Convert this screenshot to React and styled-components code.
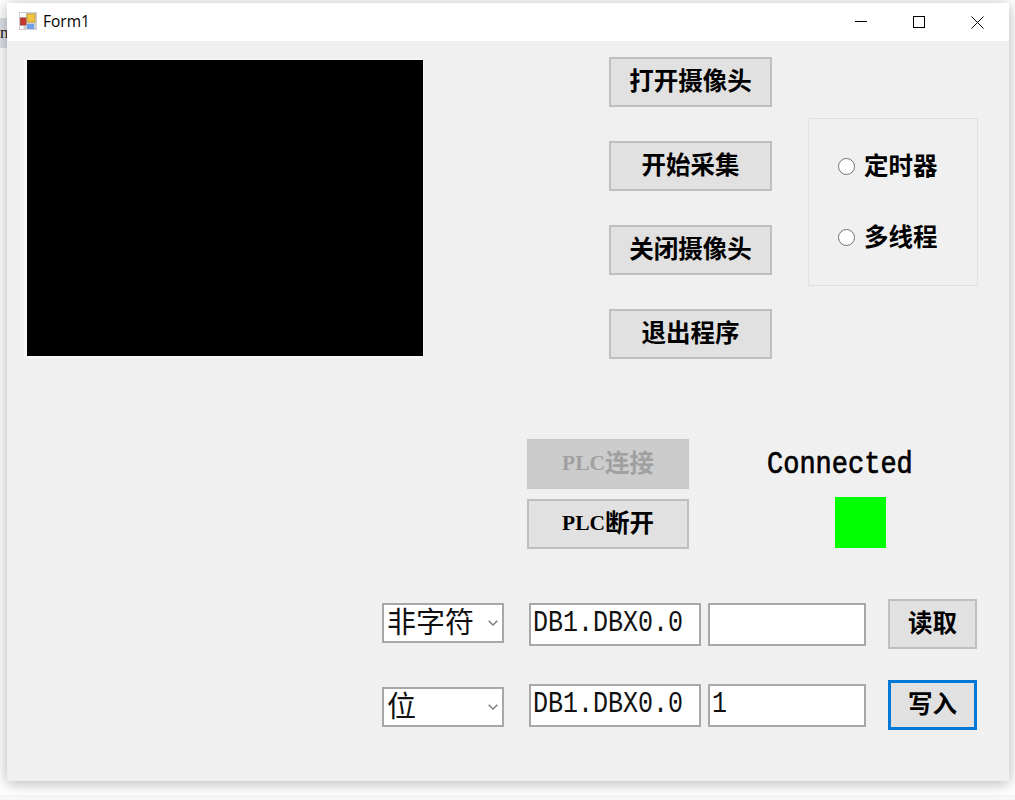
import React from 'react'
import styled, { createGlobalStyle } from 'styled-components'

const SERIF = `"Liberation Serif", "Noto Sans CJK SC", serif`
const MONO = `"Liberation Mono", "Noto Sans CJK SC", monospace`

const GlobalStyle = createGlobalStyle`
  html, body {
    margin: 0;
    padding: 0;
    background: #fff;
  }
  body {
    width: 1015px;
    height: 800px;
    overflow: hidden;
    font-family: ${SERIF};
  }
`

const Desktop = styled.div`
  position: relative;
  width: 1015px;
  height: 800px;
  padding: 3px 6px 0 7px;
  box-sizing: border-box;
  background: linear-gradient(#fff 0, #fff 795px, #f7f7f7 795px);
`

const BehindTab = styled.div`
  position: absolute;
  left: 0;
  top: 18px;
  width: 7px;
  height: 30px;
  background: #dde1e8;
  overflow: hidden;
  font: 17px ${SERIF};
  line-height: 30px;
  color: #222;
`

const Win = styled.div`
  position: relative;
  height: 778px;
  display: flex;
  flex-direction: column;
  box-shadow: 0 2px 14px rgba(0, 0, 0, 0.3);
  background: #f0f0f0;
`

const TitleBar = styled.div`
  height: 38px;
  flex: none;
  background: #fff;
  display: flex;
  align-items: center;
  padding: 0 2px 0 12px;
`

const AppIcon = styled.svg`
  width: 18px;
  height: 18px;
  margin-right: 6px;
  margin-top: -2px;
`

const TitleText = styled.span`
  flex: 1;
  font: 15.5px "Open Sans", "Noto Sans", sans-serif;
  color: #000;
  margin-top: -2px;
`

const WinButton = styled.div`
  width: 58.5px;
  height: 38px;
  display: flex;
  align-items: center;
  justify-content: center;
`

const Client = styled.div`
  flex: 1;
  display: flex;
  flex-direction: column;
`

const TopSection = styled.div`
  display: flex;
  align-items: flex-start;
  padding: 16px 0 0 17px;
`

const Camera = styled.div`
  width: 396px;
  height: 296px;
  margin-top: 2px;
  background: #000;
  border: solid #f7f7f7;
  border-width: 1px 1px 2px 3px;
  margin-right: 1px;
`

const ButtonColumn = styled.div`
  display: flex;
  flex-direction: column;
  gap: 34px;
  margin-left: 184px;
`

const Btn = styled.button`
  box-sizing: border-box;
  width: ${p => p.$w || 163}px;
  height: 50px;
  padding: 0 0 5px;
  background: ${p => (p.disabled ? '#cccccc' : '#e1e1e1')};
  border: ${p => (p.$focus ? '3px solid #0078d7' : p.disabled ? '1px solid #c8c8c8' : '2px solid #bfbfbf')};
  color: ${p => (p.disabled ? '#a0a0a0' : '#000')};
  font: bold 24.5px ${SERIF};
  display: flex;
  align-items: center;
  justify-content: center;
`

const Latin = styled.span`
  font-size: 21.5px;
  padding-top: 3px;
`

const GroupBox = styled.div`
  box-sizing: border-box;
  width: 170px;
  height: 168px;
  margin: 61px 0 0 36px;
  border: 1px solid #e0e0e0;
  display: flex;
  flex-direction: column;
  justify-content: center;
  gap: 35px;
  padding-left: 29px;
`

const RadioRow = styled.label`
  display: flex;
  align-items: center;
  height: 36px;
  gap: 9px;
  font: bold 24.5px ${SERIF};
  color: #000;
`

const RadioLabel = styled.span`
  margin-top: -4px;
`

const RadioDot = styled.span`
  box-sizing: border-box;
  width: 17px;
  height: 17px;
  border-radius: 50%;
  border: 1.5px solid #707070;
  background: #fff;
`

const PlcSection = styled.div`
  display: flex;
  align-items: flex-start;
  height: 160px;
  padding: 80px 0 0 520px;
`

const PlcButtons = styled.div`
  display: flex;
  flex-direction: column;
  gap: 10px;
`

const Status = styled.div`
  display: flex;
  flex-direction: column;
  margin-left: 78px;
  width: 146px;
`

const StatusText = styled.div`
  font: 27px ${MONO};
  -webkit-text-stroke: 0.6px #000;
  line-height: 52px;
  margin-bottom: 6px;
  color: #000;
  transform: scaleY(1.15);
`

const Led = styled.div`
  width: 51px;
  height: 51px;
  background: #00ff00;
  margin-left: 68px;
`

const FormRows = styled.div`
  display: flex;
  flex-direction: column;
  gap: 31px;
  padding-left: 375px;
`

const FormRow = styled.div`
  display: flex;
  align-items: center;
  height: 50px;
`

const Combo = styled.div`
  box-sizing: border-box;
  width: 122px;
  height: 40px;
  flex: none;
  margin-top: ${p => p.$dy}px;
  background: #fff;
  border: 2px solid #a8a8a8;
  display: flex;
  align-items: center;
  justify-content: space-between;
  padding: 0 4px 6px 3px;
  font: 29px "Noto Sans CJK SC", sans-serif;
  line-height: 32px;
  color: #111;
`

const ComboArrow = styled.svg`
  margin-top: 6px;
`

const Field = styled.div`
  box-sizing: border-box;
  width: ${p => p.$w}px;
  height: 43px;
  flex: none;
  margin-left: ${p => p.$ml}px;
  background: #fff;
  border: 2px solid #a8a8a8;
  padding-left: 2px;
  font: 25px ${MONO};
  line-height: 38px;
  color: #111;
`

const FieldText = styled.span`
  display: inline-block;
  transform: scaleY(1.2);
`

const ActionBtn = styled(Btn)`
  margin-left: 22px;
`

const Chevron = () => (
  <ComboArrow width="10" height="6" viewBox="0 0 10 6" fill="none" stroke="#777" strokeWidth="1.3">
    <path d="M0.7 0.7L5 5L9.3 0.7" />
  </ComboArrow>
)

export default function App () {
  return <Desktop>
    <GlobalStyle />
    <BehindTab>n</BehindTab>
    <Win>
      <TitleBar>
        <AppIcon viewBox="0 0 18 18">
          <rect x="0" y="0" width="18" height="18" fill="#cfcfcf" />
          <rect x="1" y="1" width="6" height="4" fill="#fff" />
          <rect x="1" y="14" width="3.5" height="3" fill="#fff" />
          <rect x="8" y="2" width="8" height="8" fill="#f2c640" stroke="#b98f1f" strokeWidth="0.7" />
          <rect x="1.5" y="6" width="5.5" height="7" fill="#c8372d" stroke="#9a3a32" strokeWidth="0.7" />
          <rect x="8" y="12" width="7" height="5" fill="#6f9fe6" />
        </AppIcon>
        <TitleText>Form1</TitleText>
        <WinButton>
          <svg width="12" height="12" viewBox="0 0 12 12"><path d="M0 5.5H12" stroke="#000" /></svg>
        </WinButton>
        <WinButton>
          <svg width="12" height="12" viewBox="0 0 12 12"><rect x="0.5" y="0.5" width="11" height="11" fill="none" stroke="#000" /></svg>
        </WinButton>
        <WinButton>
          <svg width="13" height="13" viewBox="0 0 13 13"><path d="M0.5 0.5L12.5 12.5M12.5 0.5L0.5 12.5" stroke="#000" /></svg>
        </WinButton>
      </TitleBar>
      <Client>
        <TopSection>
          <Camera />
          <ButtonColumn>
            <Btn>打开摄像头</Btn>
            <Btn>开始采集</Btn>
            <Btn>关闭摄像头</Btn>
            <Btn>退出程序</Btn>
          </ButtonColumn>
          <GroupBox>
            <RadioRow><RadioDot /><RadioLabel>定时器</RadioLabel></RadioRow>
            <RadioRow><RadioDot /><RadioLabel>多线程</RadioLabel></RadioRow>
          </GroupBox>
        </TopSection>
        <PlcSection>
          <PlcButtons>
            <Btn disabled $w={162}><Latin>PLC</Latin>连接</Btn>
            <Btn $w={162}><Latin>PLC</Latin>断开</Btn>
          </PlcButtons>
          <Status>
            <StatusText>Connected</StatusText>
            <Led />
          </Status>
        </PlcSection>
        <FormRows>
          <FormRow>
            <Combo $dy={-2}>非字符<Chevron /></Combo>
            <Field $w={172} $ml={25}><FieldText>DB1.DBX0.0</FieldText></Field>
            <Field $w={158} $ml={7} />
            <ActionBtn $w={89}>读取</ActionBtn>
          </FormRow>
          <FormRow>
            <Combo $dy={4}>位<Chevron /></Combo>
            <Field $w={172} $ml={25}><FieldText>DB1.DBX0.0</FieldText></Field>
            <Field $w={158} $ml={7}><FieldText>1</FieldText></Field>
            <ActionBtn $w={89} $focus>写入</ActionBtn>
          </FormRow>
        </FormRows>
      </Client>
    </Win>
  </Desktop>
}
